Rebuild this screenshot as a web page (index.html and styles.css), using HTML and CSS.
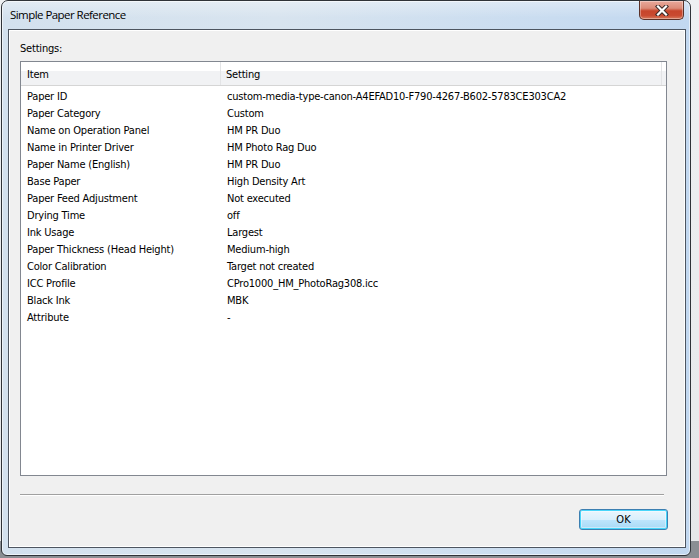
FILE: index.html
```html
<!DOCTYPE html>
<html>
<head>
<meta charset="utf-8">
<title>Simple Paper Reference</title>
<link rel="stylesheet" href="styles.css">
</head>
<body>
<div class="desktop">
  <div class="window">
    <div class="titlebar">
      <span class="title">Simple Paper Reference</span>
      <button class="close" aria-label="Close">
        <svg width="14" height="11" viewBox="0 0 14 11">
          <path d="M3 1.5 L11 9.5 M11 1.5 L3 9.5" stroke="#3b2a28" stroke-width="4.2" stroke-linecap="square" fill="none"/>
          <path d="M3 1.5 L11 9.5 M11 1.5 L3 9.5" stroke="#ffffff" stroke-width="2.2" stroke-linecap="square" fill="none"/>
        </svg>
      </button>
    </div>
    <div class="client">
      <div class="label">Settings:</div>
      <div class="list">
        <div class="header">
          <div class="hcell c1">Item</div>
          <div class="hcell c2">Setting</div>
          <div class="hcell c3"></div>
        </div>
        <div class="rows">
          <div class="row"><span class="c1">Paper ID</span><span class="c2">custom-media-type-canon-A4EFAD10-F790-4267-B602-5783CE303CA2</span></div>
          <div class="row"><span class="c1">Paper Category</span><span class="c2">Custom</span></div>
          <div class="row"><span class="c1">Name on Operation Panel</span><span class="c2">HM PR Duo</span></div>
          <div class="row"><span class="c1">Name in Printer Driver</span><span class="c2">HM Photo Rag Duo</span></div>
          <div class="row"><span class="c1">Paper Name (English)</span><span class="c2">HM PR Duo</span></div>
          <div class="row"><span class="c1">Base Paper</span><span class="c2">High Density Art</span></div>
          <div class="row"><span class="c1">Paper Feed Adjustment</span><span class="c2">Not executed</span></div>
          <div class="row"><span class="c1">Drying Time</span><span class="c2">off</span></div>
          <div class="row"><span class="c1">Ink Usage</span><span class="c2">Largest</span></div>
          <div class="row"><span class="c1">Paper Thickness (Head Height)</span><span class="c2">Medium-high</span></div>
          <div class="row"><span class="c1">Color Calibration</span><span class="c2">Target not created</span></div>
          <div class="row"><span class="c1">ICC Profile</span><span class="c2">CPro1000_HM_PhotoRag308.icc</span></div>
          <div class="row"><span class="c1">Black Ink</span><span class="c2">MBK</span></div>
          <div class="row"><span class="c1">Attribute</span><span class="c2">-</span></div>
        </div>
      </div>
      <div class="sep"></div>
      <div class="buttons">
        <button class="ok">OK</button>
      </div>
    </div>
  </div>
</div>
</body>
</html>
```

FILE: styles.css
```css
html, body {
  margin: 0;
  padding: 0;
}
body {
  width: 699px;
  height: 558px;
  overflow: hidden;
  background: #e9e9e9;
}
.desktop {
  width: 699px;
  height: 558px;
  padding-left: 1px;
  box-sizing: border-box;
  background: linear-gradient(to bottom, #eef0f2 0, #e6e8ea 97%, #8a8e93 97%);
}
.window {
  width: 690px;
  height: 556px;
  box-sizing: border-box;
  border: 1px solid #2f3338;
  border-radius: 7px 7px 6px 6px;
  background: linear-gradient(to right, #d3e1ee 0%, #d8e4ef 40%, #c9dcf0 80%, #c2d8f0 100%);
  box-shadow: inset 0 0 0 1px rgba(255,255,255,0.6);
  display: flex;
  flex-direction: column;
  padding: 0 4px 7px 6px;
}
.titlebar {
  height: 28px;
  display: flex;
  align-items: flex-start;
  justify-content: space-between;
  margin-left: -6px;
  margin-right: -4px;
  padding-left: 8px;
  padding-right: 6px;
  background: linear-gradient(to bottom, rgba(255,255,255,0.35), rgba(255,255,255,0) 60%);
  border-radius: 6px 6px 0 0;
}
.title {
  font-family: "Open Sans", "Noto Sans", sans-serif;
  font-size: 11.5px;
  letter-spacing: -0.55px;
  color: #000;
  margin-top: 6px;
  line-height: 16px;
}
.close {
  width: 45px;
  height: 19px;
  margin: 0;
  padding: 0;
  border: 1px solid #5b3128;
  border-top: none;
  border-radius: 0 0 5px 5px;
  background: linear-gradient(to bottom, #e9a99b 0%, #dc8b78 40%, #c7452b 55%, #c94a30 80%, #d77a5c 100%);
  box-shadow: inset 0 0 0 1px rgba(255,255,255,0.35);
  display: flex;
  align-items: center;
  justify-content: center;
}
.close svg {
  display: block;
}
.client {
  flex: 1;
  border: 1px solid #4d5560;
  background: #f0f0f0;
  box-shadow: inset 0 0 0 1px #ffffff;
  display: flex;
  flex-direction: column;
  font-family: "DejaVu Sans Condensed", "Liberation Sans", sans-serif;
  font-size: 11px;
  letter-spacing: -0.2px;
  color: #000;
}
.label {
  margin: 12px 0 0 11px;
  height: 13px;
  line-height: 13px;
}
.list {
  margin: 6px 0 0 11px;
  width: 647px;
  height: 415px;
  box-sizing: border-box;
  border: 1px solid #828790;
  background: #fff;
  display: flex;
  flex-direction: column;
}
.header {
  height: 24px;
  box-sizing: border-box;
  border-bottom: 1px solid #d5d5d5;
  background: linear-gradient(to bottom, #ffffff 0%, #ffffff 40%, #f1f2f4 41%, #f1f2f4 100%);
  display: flex;
}
.hcell {
  line-height: 20px;
  padding-top: 3px;
  box-sizing: border-box;
}
.hcell.c1 {
  width: 200px;
  padding-left: 6px;
  border-right: 1px solid #e3e4e6;
}
.hcell.c2 {
  width: 441px;
  padding-left: 5px;
  border-right: 1px solid #e3e4e6;
}
.hcell.c3 {
  flex: 1;
}
.rows {
  padding-top: 2px;
}
.row {
  height: 17px;
  line-height: 17px;
  display: flex;
  white-space: nowrap;
}
.row .c1 {
  width: 200px;
  padding-left: 6px;
  box-sizing: border-box;
}
.row .c2 {
  padding-left: 6px;
}
.sep {
  margin: 18px 0 0 11px;
  width: 644px;
  height: 1px;
  background: #a0a0a0;
  border-bottom: 1px solid #ffffff;
}
.buttons {
  display: flex;
  justify-content: flex-end;
  padding-right: 17px;
  margin-top: 13px;
}
.ok {
  width: 89px;
  height: 21px;
  margin: 0;
  padding: 0;
  border: 1px solid #3c7fb1;
  border-radius: 3px;
  background: linear-gradient(to bottom, #eaf6fd 0%, #d9f0fc 50%, #bee6fd 51%, #a7d9f5 100%);
  box-shadow: inset 0 0 0 1px #48d6fa, inset 0 0 0 2px rgba(255,255,255,0.4);
  font-family: "DejaVu Sans Condensed", "Liberation Sans", sans-serif;
  font-size: 11px;
  color: #000;
}
```
